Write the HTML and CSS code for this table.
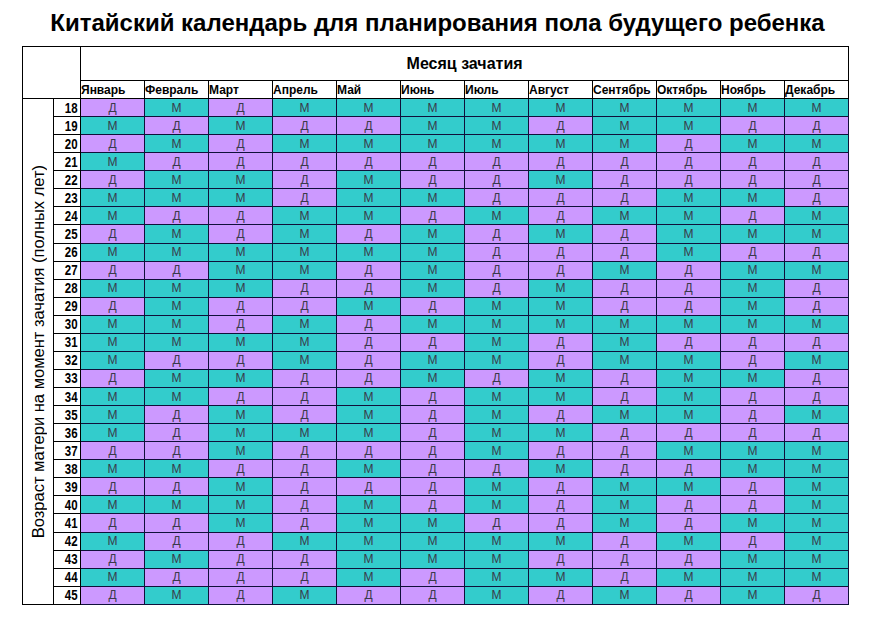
FILE: index.html
```html
<!DOCTYPE html>
<html lang="ru">
<head>
<meta charset="utf-8">
<title>Китайский календарь</title>
<link rel="stylesheet" href="styles.css">
</head>
<body>
<h1 class="title">Китайский календарь для планирования пола будущего ребенка</h1>
<table class="cal">
<colgroup>
<col class="c-side"><col class="c-num">
<col class="c-m"><col class="c-m"><col class="c-m"><col class="c-m"><col class="c-m"><col class="c-m">
<col class="c-m"><col class="c-m"><col class="c-m"><col class="c-m"><col class="c-m"><col class="c-m">
</colgroup>
<thead>
<tr class="h1row"><th class="corner" colspan="2" rowspan="2"></th><th class="month-title" colspan="12">Месяц зачатия</th></tr>
<tr class="h2row"><th class="mn">Январь</th><th class="mn">Февраль</th><th class="mn">Март</th><th class="mn">Апрель</th><th class="mn">Май</th><th class="mn">Июнь</th><th class="mn">Июль</th><th class="mn">Август</th><th class="mn">Сентябрь</th><th class="mn">Октябрь</th><th class="mn">Ноябрь</th><th class="mn">Декабрь</th></tr>
</thead>
<tbody>
<tr><td class="side" rowspan="28"><div class="side-text">Возраст матери на момент зачатия (полных лет)</div></td><td class="num"><span>18</span></td><td class="d">Д</td><td class="m">М</td><td class="d">Д</td><td class="m">М</td><td class="m">М</td><td class="m">М</td><td class="m">М</td><td class="m">М</td><td class="m">М</td><td class="m">М</td><td class="m">М</td><td class="m">М</td></tr>
<tr><td class="num"><span>19</span></td><td class="m">М</td><td class="d">Д</td><td class="m">М</td><td class="d">Д</td><td class="d">Д</td><td class="m">М</td><td class="m">М</td><td class="d">Д</td><td class="m">М</td><td class="m">М</td><td class="d">Д</td><td class="d">Д</td></tr>
<tr><td class="num"><span>20</span></td><td class="d">Д</td><td class="m">М</td><td class="d">Д</td><td class="m">М</td><td class="m">М</td><td class="m">М</td><td class="m">М</td><td class="m">М</td><td class="m">М</td><td class="d">Д</td><td class="m">М</td><td class="m">М</td></tr>
<tr><td class="num"><span>21</span></td><td class="m">М</td><td class="d">Д</td><td class="d">Д</td><td class="d">Д</td><td class="d">Д</td><td class="d">Д</td><td class="d">Д</td><td class="d">Д</td><td class="d">Д</td><td class="d">Д</td><td class="d">Д</td><td class="d">Д</td></tr>
<tr><td class="num"><span>22</span></td><td class="d">Д</td><td class="m">М</td><td class="m">М</td><td class="d">Д</td><td class="m">М</td><td class="d">Д</td><td class="d">Д</td><td class="m">М</td><td class="d">Д</td><td class="d">Д</td><td class="d">Д</td><td class="d">Д</td></tr>
<tr><td class="num"><span>23</span></td><td class="m">М</td><td class="m">М</td><td class="m">М</td><td class="d">Д</td><td class="m">М</td><td class="m">М</td><td class="d">Д</td><td class="d">Д</td><td class="d">Д</td><td class="m">М</td><td class="m">М</td><td class="d">Д</td></tr>
<tr><td class="num"><span>24</span></td><td class="m">М</td><td class="d">Д</td><td class="d">Д</td><td class="m">М</td><td class="m">М</td><td class="d">Д</td><td class="m">М</td><td class="d">Д</td><td class="m">М</td><td class="m">М</td><td class="d">Д</td><td class="m">М</td></tr>
<tr><td class="num"><span>25</span></td><td class="d">Д</td><td class="m">М</td><td class="d">Д</td><td class="m">М</td><td class="d">Д</td><td class="m">М</td><td class="d">Д</td><td class="m">М</td><td class="d">Д</td><td class="m">М</td><td class="m">М</td><td class="m">М</td></tr>
<tr><td class="num"><span>26</span></td><td class="m">М</td><td class="m">М</td><td class="m">М</td><td class="m">М</td><td class="m">М</td><td class="m">М</td><td class="d">Д</td><td class="d">Д</td><td class="d">Д</td><td class="m">М</td><td class="d">Д</td><td class="d">Д</td></tr>
<tr><td class="num"><span>27</span></td><td class="d">Д</td><td class="d">Д</td><td class="m">М</td><td class="m">М</td><td class="d">Д</td><td class="m">М</td><td class="d">Д</td><td class="d">Д</td><td class="m">М</td><td class="d">Д</td><td class="m">М</td><td class="m">М</td></tr>
<tr><td class="num"><span>28</span></td><td class="m">М</td><td class="m">М</td><td class="m">М</td><td class="d">Д</td><td class="d">Д</td><td class="m">М</td><td class="d">Д</td><td class="m">М</td><td class="d">Д</td><td class="d">Д</td><td class="m">М</td><td class="d">Д</td></tr>
<tr><td class="num"><span>29</span></td><td class="d">Д</td><td class="m">М</td><td class="d">Д</td><td class="d">Д</td><td class="m">М</td><td class="d">Д</td><td class="m">М</td><td class="m">М</td><td class="d">Д</td><td class="d">Д</td><td class="m">М</td><td class="d">Д</td></tr>
<tr><td class="num"><span>30</span></td><td class="m">М</td><td class="m">М</td><td class="d">Д</td><td class="m">М</td><td class="d">Д</td><td class="m">М</td><td class="m">М</td><td class="m">М</td><td class="m">М</td><td class="m">М</td><td class="m">М</td><td class="m">М</td></tr>
<tr><td class="num"><span>31</span></td><td class="m">М</td><td class="m">М</td><td class="m">М</td><td class="m">М</td><td class="d">Д</td><td class="d">Д</td><td class="m">М</td><td class="d">Д</td><td class="m">М</td><td class="d">Д</td><td class="d">Д</td><td class="d">Д</td></tr>
<tr><td class="num"><span>32</span></td><td class="m">М</td><td class="d">Д</td><td class="d">Д</td><td class="m">М</td><td class="d">Д</td><td class="m">М</td><td class="m">М</td><td class="d">Д</td><td class="m">М</td><td class="m">М</td><td class="d">Д</td><td class="m">М</td></tr>
<tr><td class="num"><span>33</span></td><td class="d">Д</td><td class="m">М</td><td class="m">М</td><td class="d">Д</td><td class="d">Д</td><td class="m">М</td><td class="d">Д</td><td class="m">М</td><td class="d">Д</td><td class="m">М</td><td class="m">М</td><td class="d">Д</td></tr>
<tr><td class="num"><span>34</span></td><td class="m">М</td><td class="m">М</td><td class="d">Д</td><td class="d">Д</td><td class="m">М</td><td class="d">Д</td><td class="m">М</td><td class="m">М</td><td class="d">Д</td><td class="m">М</td><td class="d">Д</td><td class="d">Д</td></tr>
<tr><td class="num"><span>35</span></td><td class="m">М</td><td class="d">Д</td><td class="m">М</td><td class="d">Д</td><td class="m">М</td><td class="d">Д</td><td class="m">М</td><td class="d">Д</td><td class="m">М</td><td class="m">М</td><td class="d">Д</td><td class="m">М</td></tr>
<tr><td class="num"><span>36</span></td><td class="m">М</td><td class="d">Д</td><td class="m">М</td><td class="m">М</td><td class="m">М</td><td class="d">Д</td><td class="m">М</td><td class="m">М</td><td class="d">Д</td><td class="d">Д</td><td class="d">Д</td><td class="d">Д</td></tr>
<tr><td class="num"><span>37</span></td><td class="d">Д</td><td class="d">Д</td><td class="m">М</td><td class="d">Д</td><td class="d">Д</td><td class="d">Д</td><td class="m">М</td><td class="d">Д</td><td class="d">Д</td><td class="m">М</td><td class="m">М</td><td class="m">М</td></tr>
<tr><td class="num"><span>38</span></td><td class="m">М</td><td class="m">М</td><td class="d">Д</td><td class="d">Д</td><td class="m">М</td><td class="d">Д</td><td class="d">Д</td><td class="m">М</td><td class="d">Д</td><td class="d">Д</td><td class="m">М</td><td class="m">М</td></tr>
<tr><td class="num"><span>39</span></td><td class="d">Д</td><td class="d">Д</td><td class="m">М</td><td class="d">Д</td><td class="d">Д</td><td class="d">Д</td><td class="m">М</td><td class="d">Д</td><td class="m">М</td><td class="m">М</td><td class="d">Д</td><td class="m">М</td></tr>
<tr><td class="num"><span>40</span></td><td class="m">М</td><td class="m">М</td><td class="m">М</td><td class="d">Д</td><td class="m">М</td><td class="d">Д</td><td class="m">М</td><td class="d">Д</td><td class="m">М</td><td class="d">Д</td><td class="d">Д</td><td class="m">М</td></tr>
<tr><td class="num"><span>41</span></td><td class="d">Д</td><td class="d">Д</td><td class="m">М</td><td class="d">Д</td><td class="m">М</td><td class="m">М</td><td class="d">Д</td><td class="d">Д</td><td class="m">М</td><td class="d">Д</td><td class="m">М</td><td class="m">М</td></tr>
<tr><td class="num"><span>42</span></td><td class="m">М</td><td class="d">Д</td><td class="d">Д</td><td class="m">М</td><td class="m">М</td><td class="m">М</td><td class="m">М</td><td class="m">М</td><td class="d">Д</td><td class="m">М</td><td class="d">Д</td><td class="m">М</td></tr>
<tr><td class="num"><span>43</span></td><td class="d">Д</td><td class="m">М</td><td class="d">Д</td><td class="d">Д</td><td class="m">М</td><td class="m">М</td><td class="m">М</td><td class="d">Д</td><td class="d">Д</td><td class="d">Д</td><td class="m">М</td><td class="m">М</td></tr>
<tr><td class="num"><span>44</span></td><td class="m">М</td><td class="d">Д</td><td class="d">Д</td><td class="d">Д</td><td class="m">М</td><td class="d">Д</td><td class="m">М</td><td class="m">М</td><td class="d">Д</td><td class="m">М</td><td class="m">М</td><td class="m">М</td></tr>
<tr><td class="num"><span>45</span></td><td class="d">Д</td><td class="m">М</td><td class="d">Д</td><td class="m">М</td><td class="d">Д</td><td class="d">Д</td><td class="m">М</td><td class="d">Д</td><td class="m">М</td><td class="d">Д</td><td class="m">М</td><td class="d">Д</td></tr>
</tbody>
</table>
</body>
</html>
```
FILE: styles.css
```css
html, body {
  margin: 0;
  padding: 0;
  background: #ffffff;
}
body {
  font-family: "Liberation Sans", Arial, sans-serif;
  color: #000;
}
.title {
  margin: 0;
  padding-top: 9px;
  height: 46px;
  box-sizing: border-box;
  text-align: center;
  font-size: 24px;
  line-height: 28px;
  font-weight: bold;
}
.cal {
  margin-left: 22px;
  border-collapse: collapse;
  table-layout: fixed;
  width: 826px;
  border: 1px solid #000;
}
.c-side { width: 31px; }
.c-num { width: 27px; }
.c-m { width: 64px; }
.cal th, .cal td {
  padding: 0;
  border: 1px solid #000;
}
.h1row { height: 34px; }
.h2row { height: 18px; }
.corner { background: #fff; }
.month-title {
  font-size: 16px;
  font-weight: bold;
  text-align: center;
  vertical-align: middle;
  padding-right: 6px;
}
.mn {
  font-size: 12px;
  font-weight: bold;
  text-align: left;
  padding-left: 2px;
  white-space: nowrap;
  overflow: visible;
  line-height: 16px;
  vertical-align: bottom;
}
.cal tbody tr { height: 18.07px; }
.cal tbody td {
  border-color: #10103a;
  font-size: 12px;
  line-height: 16px;
  text-align: center;
  color: #3a3a4a;
}
.cal tbody td.side {
  border-color: #000;
  background: #fff;
  vertical-align: middle;
  text-align: center;
}
.side-text {
  writing-mode: vertical-rl;
  transform: rotate(180deg);
  font-size: 16.5px;
  color: #000;
  white-space: nowrap;
  margin: 0 auto;
}
.cal tbody td.num {
  border-color: #000;
  background: #fff;
  text-align: right;
  padding-right: 2px;
  font-weight: bold;
  font-size: 14px;
  color: #000;
}
.num span {
  display: inline-block;
  transform: scaleX(0.82);
  transform-origin: right center;
}
.d { background: #cc99ff; }
.m { background: #33cccc; }
```
